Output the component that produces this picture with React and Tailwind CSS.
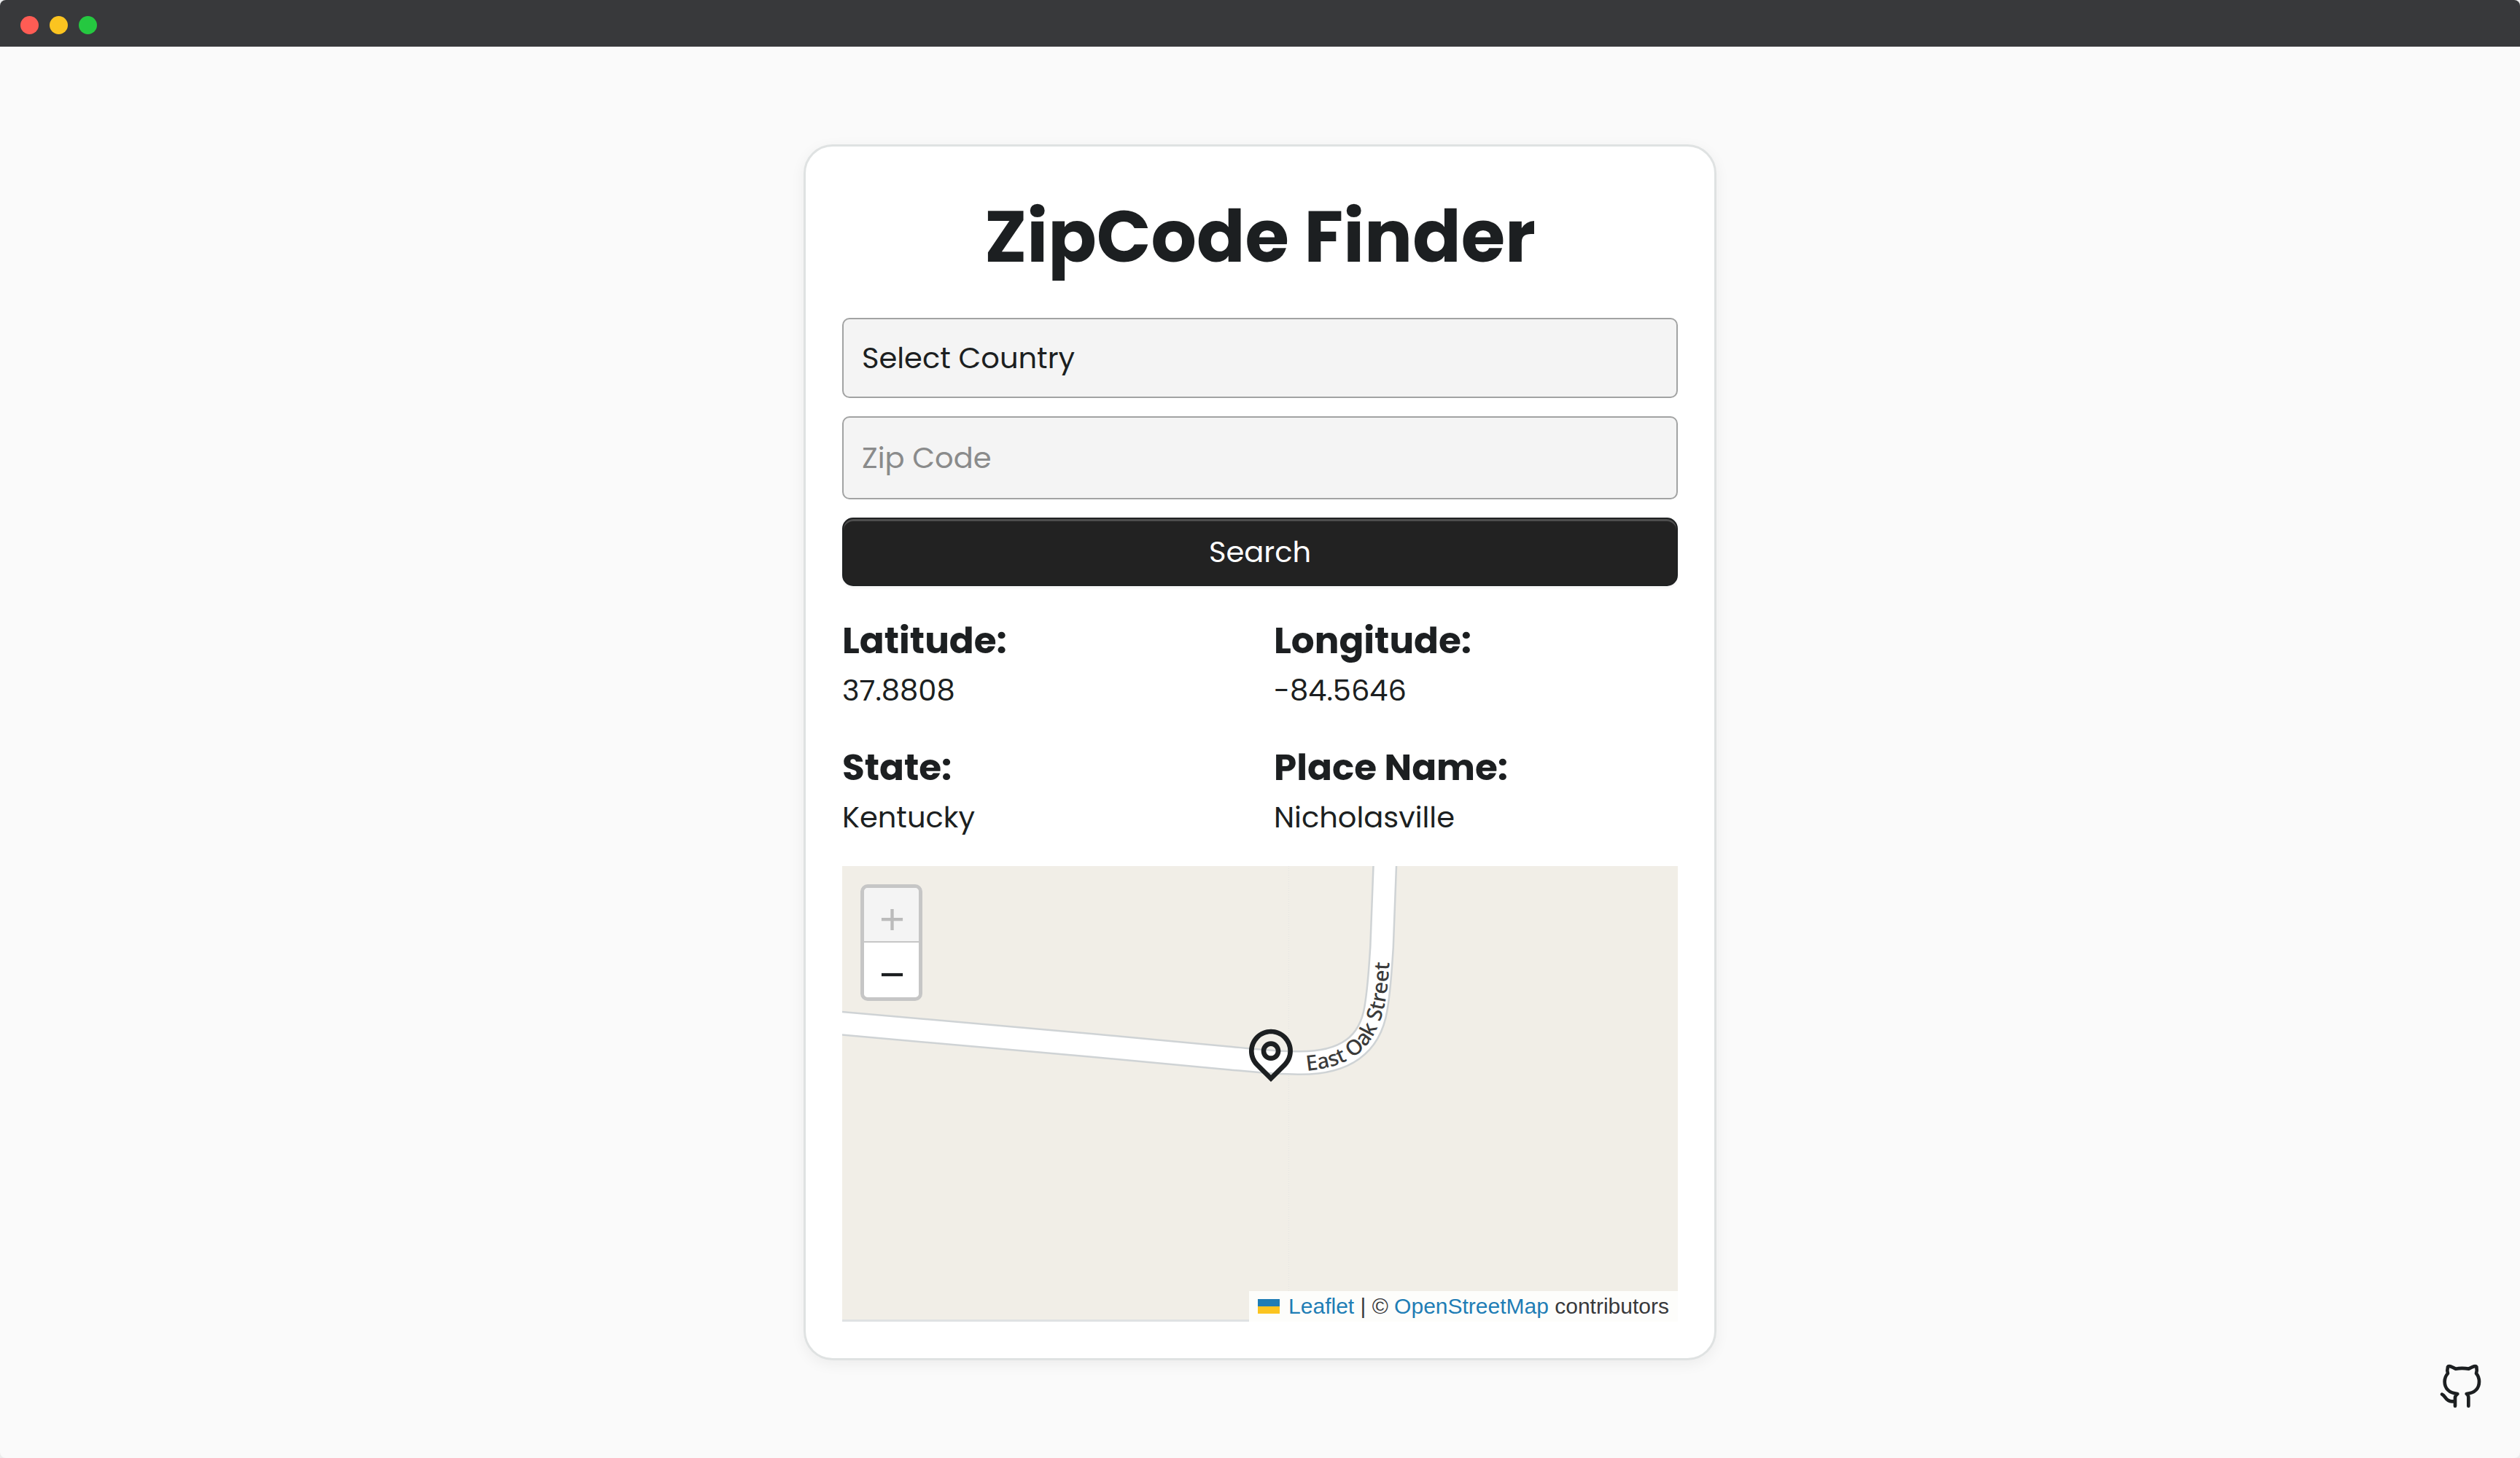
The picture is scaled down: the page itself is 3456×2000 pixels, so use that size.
import { RiMapPinLine } from "react-icons/ri";

const results = [
  { label: "Latitude:", value: "37.8808" },
  { label: "Longitude:", value: "-84.5646" },
  { label: "State:", value: "Kentucky" },
  { label: "Place Name:", value: "Nicholasville" },
];

const ROAD =
  "M-20 214 L343 246 L525 263 C570 267 590 270 625 270 C690 271 724 245 732 195 C737 165 738 140 740 112 L745 -20";
const ROAD_LABEL = "M637 281 C690 276 717 258 733 224 C746 196 749 165 751 120 L754 60";

function TitleBar() {
  return (
    <header className="flex h-16 shrink-0 items-center gap-[15px] bg-[#38393b] px-7 pt-1">
      <span className="size-[25px] rounded-full bg-[#ff5c54]" />
      <span className="size-[25px] rounded-full bg-[#fbc420]" />
      <span className="size-[25px] rounded-full bg-[#25c840]" />
    </header>
  );
}

function SearchForm() {
  return (
    <form className="flex flex-col gap-[25px]" onSubmit={(e) => e.preventDefault()}>
      <select
        aria-label="Country"
        className="h-[110px] w-full appearance-none rounded-[10px] border-2 border-[#a2a3a3] bg-[#f4f4f4] px-[25px] text-[40px] leading-[60px] text-[#1c1f21]"
      >
        <option>Select Country</option>
      </select>
      <input
        type="text"
        aria-label="Zip Code"
        placeholder="Zip Code"
        className="h-[114px] w-full rounded-[10px] border-2 border-[#a2a3a3] bg-[#f4f4f4] px-[25px] text-[40px] leading-[60px] text-[#1c1f21] placeholder:text-[#8a8b8b]"
      />
      <button
        type="submit"
        className="h-[94px] w-full rounded-[15px] border-2 border-[#1f2122] bg-[#222222] text-[40px] leading-[60px] text-white shadow-[inset_0_3px_0_rgba(255,255,255,0.2),0_3px_3px_rgba(0,0,0,0.04)]"
      >
        Search
      </button>
    </form>
  );
}

function Results() {
  return (
    <dl className="mt-[37px] grid grid-cols-2 gap-[38px]">
      {results.map(({ label, value }) => (
        <div key={label}>
          <dt className="text-[50px] leading-[76px] font-bold">{label}</dt>
          <dd className="text-[40px] leading-[60px]">{value}</dd>
        </div>
      ))}
    </dl>
  );
}

function ZoomControl() {
  return (
    <div className="absolute top-[25px] left-[25px] flex w-[85px] flex-col overflow-hidden rounded-[10px] border-5 border-[#c6c6c6] font-['Liberation_Sans',Arial,sans-serif] text-[60px] leading-[60px]">
      <button
        type="button"
        aria-label="Zoom in"
        disabled
        className="h-[75px] border-b-2 border-[#c6c6c6] bg-[#f4f4f4] pt-[13px] pl-[2px] text-[#bbbbbb]"
      >
        +
      </button>
      <button type="button" aria-label="Zoom out" className="h-[75px] bg-white pt-[13px] pl-[2px] text-[#1c1f21]">
        −
      </button>
    </div>
  );
}

function StreetMap() {
  return (
    <section aria-label="Map" className="relative mt-[37px] overflow-hidden bg-[#f1eee7]">
      <svg
        viewBox="0 0 1146 622"
        preserveAspectRatio="xMidYMid slice"
        className="block h-[625px] w-full border-b-3 border-[#dfe2e3]"
      >
        <path d="M612.5 0V622" stroke="#e4e4e2" strokeDasharray="1 2" />
        <path d={ROAD} fill="none" stroke="#cfd3d5" strokeWidth="34" />
        <path d={ROAD} fill="none" stroke="#ffffff" strokeWidth="29" />
        <path id="street-label" d={ROAD_LABEL} fill="none" />
        <text fontFamily="Noto Sans, sans-serif" fontSize="29" fontWeight="500" fill="#3a3a3a">
          <textPath href="#street-label">East Oak Street</textPath>
        </text>
      </svg>
      <RiMapPinLine className="absolute top-[217px] left-[548px] size-20 text-[#1c1f21]" />
      <ZoomControl />
      <div className="absolute right-0 bottom-0 h-[42px] bg-[#fdfdfb] px-3 font-['Liberation_Sans',Arial,sans-serif] text-[30px] leading-[42px] text-[#38393b]">
        <a href="#leaflet" className="text-[#1f7db5]">
          <svg viewBox="0 0 12 8" className="mr-1 inline h-5 w-[30px] align-baseline" aria-hidden="true">
            <path fill="#1f7db5" d="M0 0h12v4H0z" />
            <path fill="#fbc420" d="M0 4h12v4H0z" />
          </svg>{" "}
          Leaflet
        </a>{" "}
        | ©{" "}
        <a href="#openstreetmap" className="text-[#1f7db5]">
          OpenStreetMap
        </a>{" "}
        contributors
      </div>
    </section>
  );
}

function GithubLink() {
  return (
    <a href="#github" aria-label="GitHub" className="fixed right-[51px] bottom-[68px] text-[#1c1f21]">
      <svg
        viewBox="45 30 180 186"
        fill="none"
        stroke="currentColor"
        strokeWidth="14"
        strokeLinecap="round"
        strokeLinejoin="round"
        className="block h-[62px] w-[60px]"
      >
        <path d="M166 206V170Q166 162 158 156C192 153 210 133 210 106Q210 86 198 72Q202 60 199 45Q197 41 189 43Q180 46 167 53Q139 48 113 53Q100 46 91 43Q83 41 81 45Q77 60 81 72Q68 86 68 106C68 133 86 153 121 156Q111 164 111 172V206" />
        <path d="M57 158C72 164 72 187 96 187H109" />
      </svg>
    </a>
  );
}

export default function App() {
  return (
    <div className="bg-[#eceded]">
      <div className="flex min-h-screen flex-col overflow-hidden rounded-[8px] bg-[#fafafa] font-['Poppins','Inter',sans-serif] text-[#1c1f21]">
        <TitleBar />
        <main className="flex flex-1 items-center justify-center">
          <div className="w-full max-w-[1252px] rounded-[40px] border-3 border-[#dfe2e2] bg-white p-[50px] shadow-[0_5px_20px_rgba(0,0,0,0.06)]">
            <h1 className="mb-[38px] text-center text-[98px] leading-[147px] font-bold">ZipCode Finder</h1>
            <SearchForm />
            <Results />
            <StreetMap />
          </div>
        </main>
        <GithubLink />
      </div>
    </div>
  );
}
